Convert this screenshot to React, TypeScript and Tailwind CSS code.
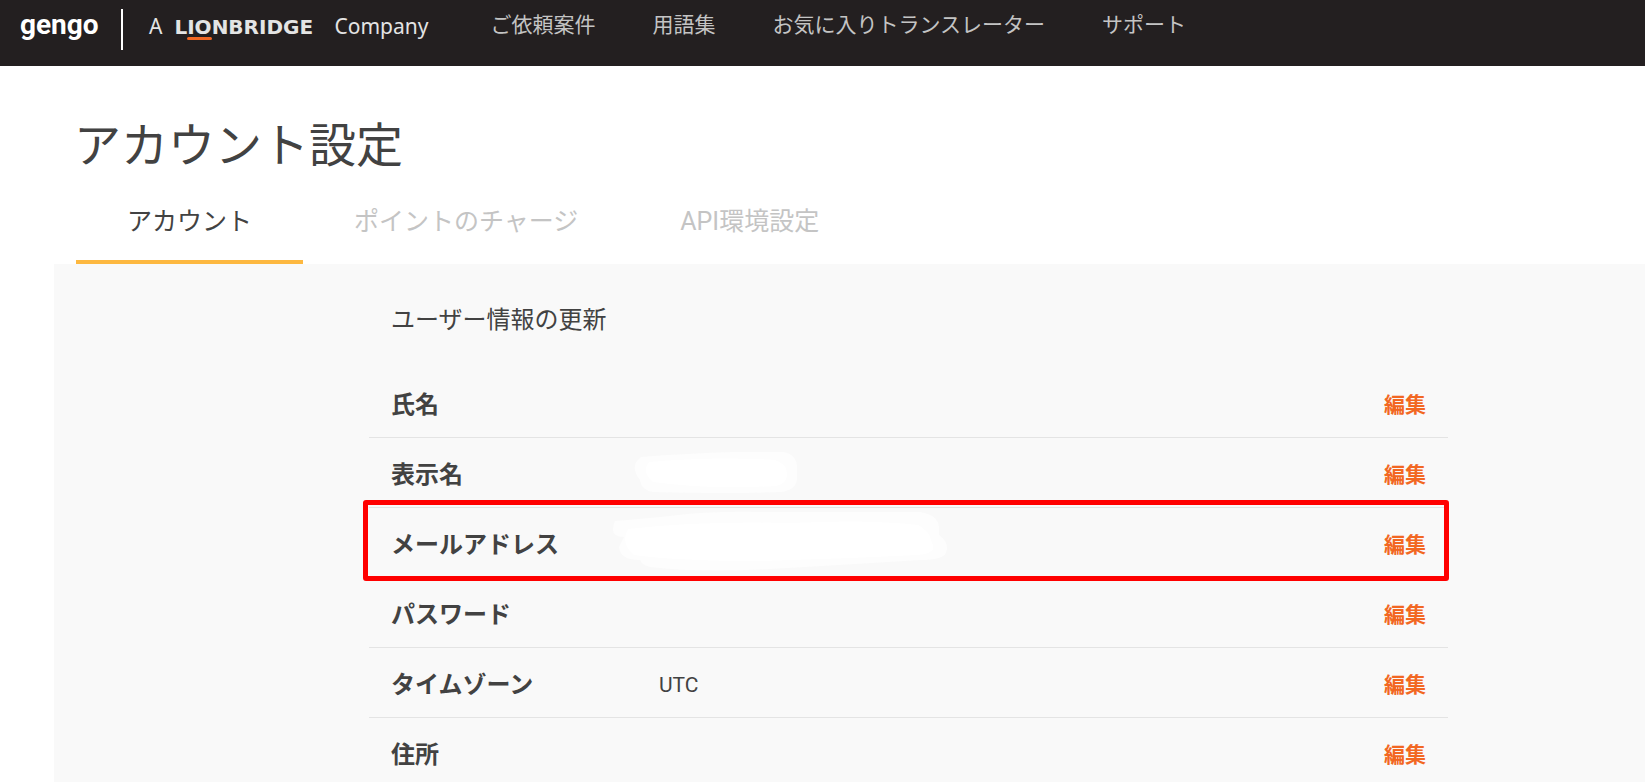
import { clsx } from 'clsx';

const navItems = ['ご依頼案件', '用語集', 'お気に入りトランスレーター', 'サポート'];

const tabs = [
  { label: 'アカウント', active: true },
  { label: 'ポイントのチャージ', active: false },
  { label: 'API環境設定', active: false },
];

const fields = [
  { id: 'name', label: '氏名', value: '' },
  { id: 'display', label: '表示名', value: '' },
  { id: 'email', label: 'メールアドレス', value: '', highlighted: true },
  { id: 'password', label: 'パスワード', value: '' },
  { id: 'timezone', label: 'タイムゾーン', value: 'UTC' },
  { id: 'address', label: '住所', value: '' },
];

const Logo = () => (
  <a href="#" className="flex h-[50px] items-center text-[#e4e4e4]">
    <span className="w-[80px] font-['Roboto',sans-serif] text-[28px] leading-8 font-bold text-white">
      gengo
    </span>
    <span className="ml-[21px] h-[41px] w-0.5 translate-y-1 bg-white" />
    <span className="ml-[26px] flex items-baseline pt-0.5 font-['Noto_Sans',sans-serif] text-[21px] leading-6">
      <span>A</span>
      <span className="ml-[12px] w-[148px] font-['DejaVu_Sans',sans-serif] text-[20px] font-bold">
        L
        <span className="relative">
          IO
          <span className="absolute inset-x-0 -bottom-px h-[3px] rounded-full bg-[#f26722]" />
        </span>
        NBRIDGE
      </span>
      <span className="ml-[12px]">Company</span>
    </span>
  </a>
);

// Brushed-out values
const DisplayNameMask = () => (
  <svg className="absolute top-[14px] left-[264px] h-[42px] w-[166px]" viewBox="0 0 166 42" aria-hidden="true">
    <path
      d="M8 5 Q30 3 55 2 Q100 -1 150 0 Q164 2 164 16 V28 Q162 38 148 40 Q90 42 20 40 Q8 38 7 28 Q-4 14 8 5Z"
      fill="#fdfdfd"
    />
    <path d="M16 10 Q80 4 142 8 Q154 12 154 22 Q154 32 142 34 Q80 38 20 30 Q8 20 16 10Z" fill="#fff" />
  </svg>
);

const EmailMask = () => (
  <svg className="absolute top-[3px] left-[241px] h-[60px] w-[340px]" viewBox="0 0 340 60" aria-hidden="true">
    <path
      d="M5 10 Q30 8 60 5 Q100 0 150 1 H310 Q328 4 329 16 V24 Q340 32 336 42 Q333 49 310 49 Q230 54 160 58 Q90 62 40 56 Q32 54 30 49 Q10 49 9 36 L14 26 Q-2 26 5 10Z"
      fill="#fdfdfd"
    />
    <path
      d="M18 18 Q90 10 180 12 Q260 8 308 14 Q320 20 322 32 Q328 42 308 44 Q230 48 150 50 Q70 50 24 44 Q10 32 18 18Z"
      fill="#fff"
    />
  </svg>
);

const App = () => {
  return (
    <div className="min-h-screen bg-white font-['Roboto','Noto_Sans_CJK_JP',sans-serif] text-[#424242]" lang="ja">
      <header className="flex h-[66px] items-start bg-[#231f20] pl-5">
        <Logo />
        <nav className="ml-[62px] flex h-[50px] items-center gap-[57px]">
          {navItems.map((item) => (
            <a key={item} href="#" className="text-[21px] leading-6 whitespace-nowrap text-[#c4c4c4]">
              {item}
            </a>
          ))}
        </nav>
      </header>

      <main>
        <h1 className="pt-[52px] pl-[74px] text-[47px] leading-[56px]">アカウント設定</h1>

        {/* Tabs */}
        <div role="tablist" className="flex h-[90px] pl-[76px]">
          {tabs.map((tab) => (
            <button
              key={tab.label}
              type="button"
              role="tab"
              aria-selected={tab.active}
              className={clsx(
                'border-b-4 px-[51px] pt-[10px] text-[25px] leading-8 whitespace-nowrap',
                tab.active ? 'border-[#fdb840]' : 'border-transparent text-[#c4c4c4]',
              )}
            >
              {tab.label}
            </button>
          ))}
        </div>

        <section className="ml-[54px] min-h-[calc(100vh-264px)] bg-[#f9f9f9] pr-[197px] pl-[315px]">
          <h2 className="pt-10 pb-8 pl-[22px] text-[24px] leading-8">ユーザー情報の更新</h2>

          {/* Account fields */}
          <dl>
            {fields.map((field, index) => (
              <div
                key={field.id}
                className={clsx(
                  'relative flex h-[70px] items-center px-[22px] pt-1',
                  index < fields.length - 1 && 'border-b border-[#e4e4e4]',
                )}
              >
                {field.id === 'display' && <DisplayNameMask />}
                {field.id === 'email' && <EmailMask />}
                <dt className="w-[268px] shrink-0 text-[24px] leading-8 font-bold">{field.label}</dt>
                <dd className="grow text-[21px] leading-8">{field.value}</dd>
                <dd>
                  <button
                    type="button"
                    aria-label={`${field.label}を編集`}
                    className="text-[21px] leading-8 font-bold text-[#f26722]"
                  >
                    編集
                  </button>
                </dd>
                {field.highlighted && (
                  <span className="pointer-events-none absolute -top-2 -right-px -bottom-1 -left-[6px] rounded-[3px] border-[5px] border-[#ff0000]" />
                )}
              </div>
            ))}
          </dl>
        </section>
      </main>
    </div>
  );
};

export default App;
